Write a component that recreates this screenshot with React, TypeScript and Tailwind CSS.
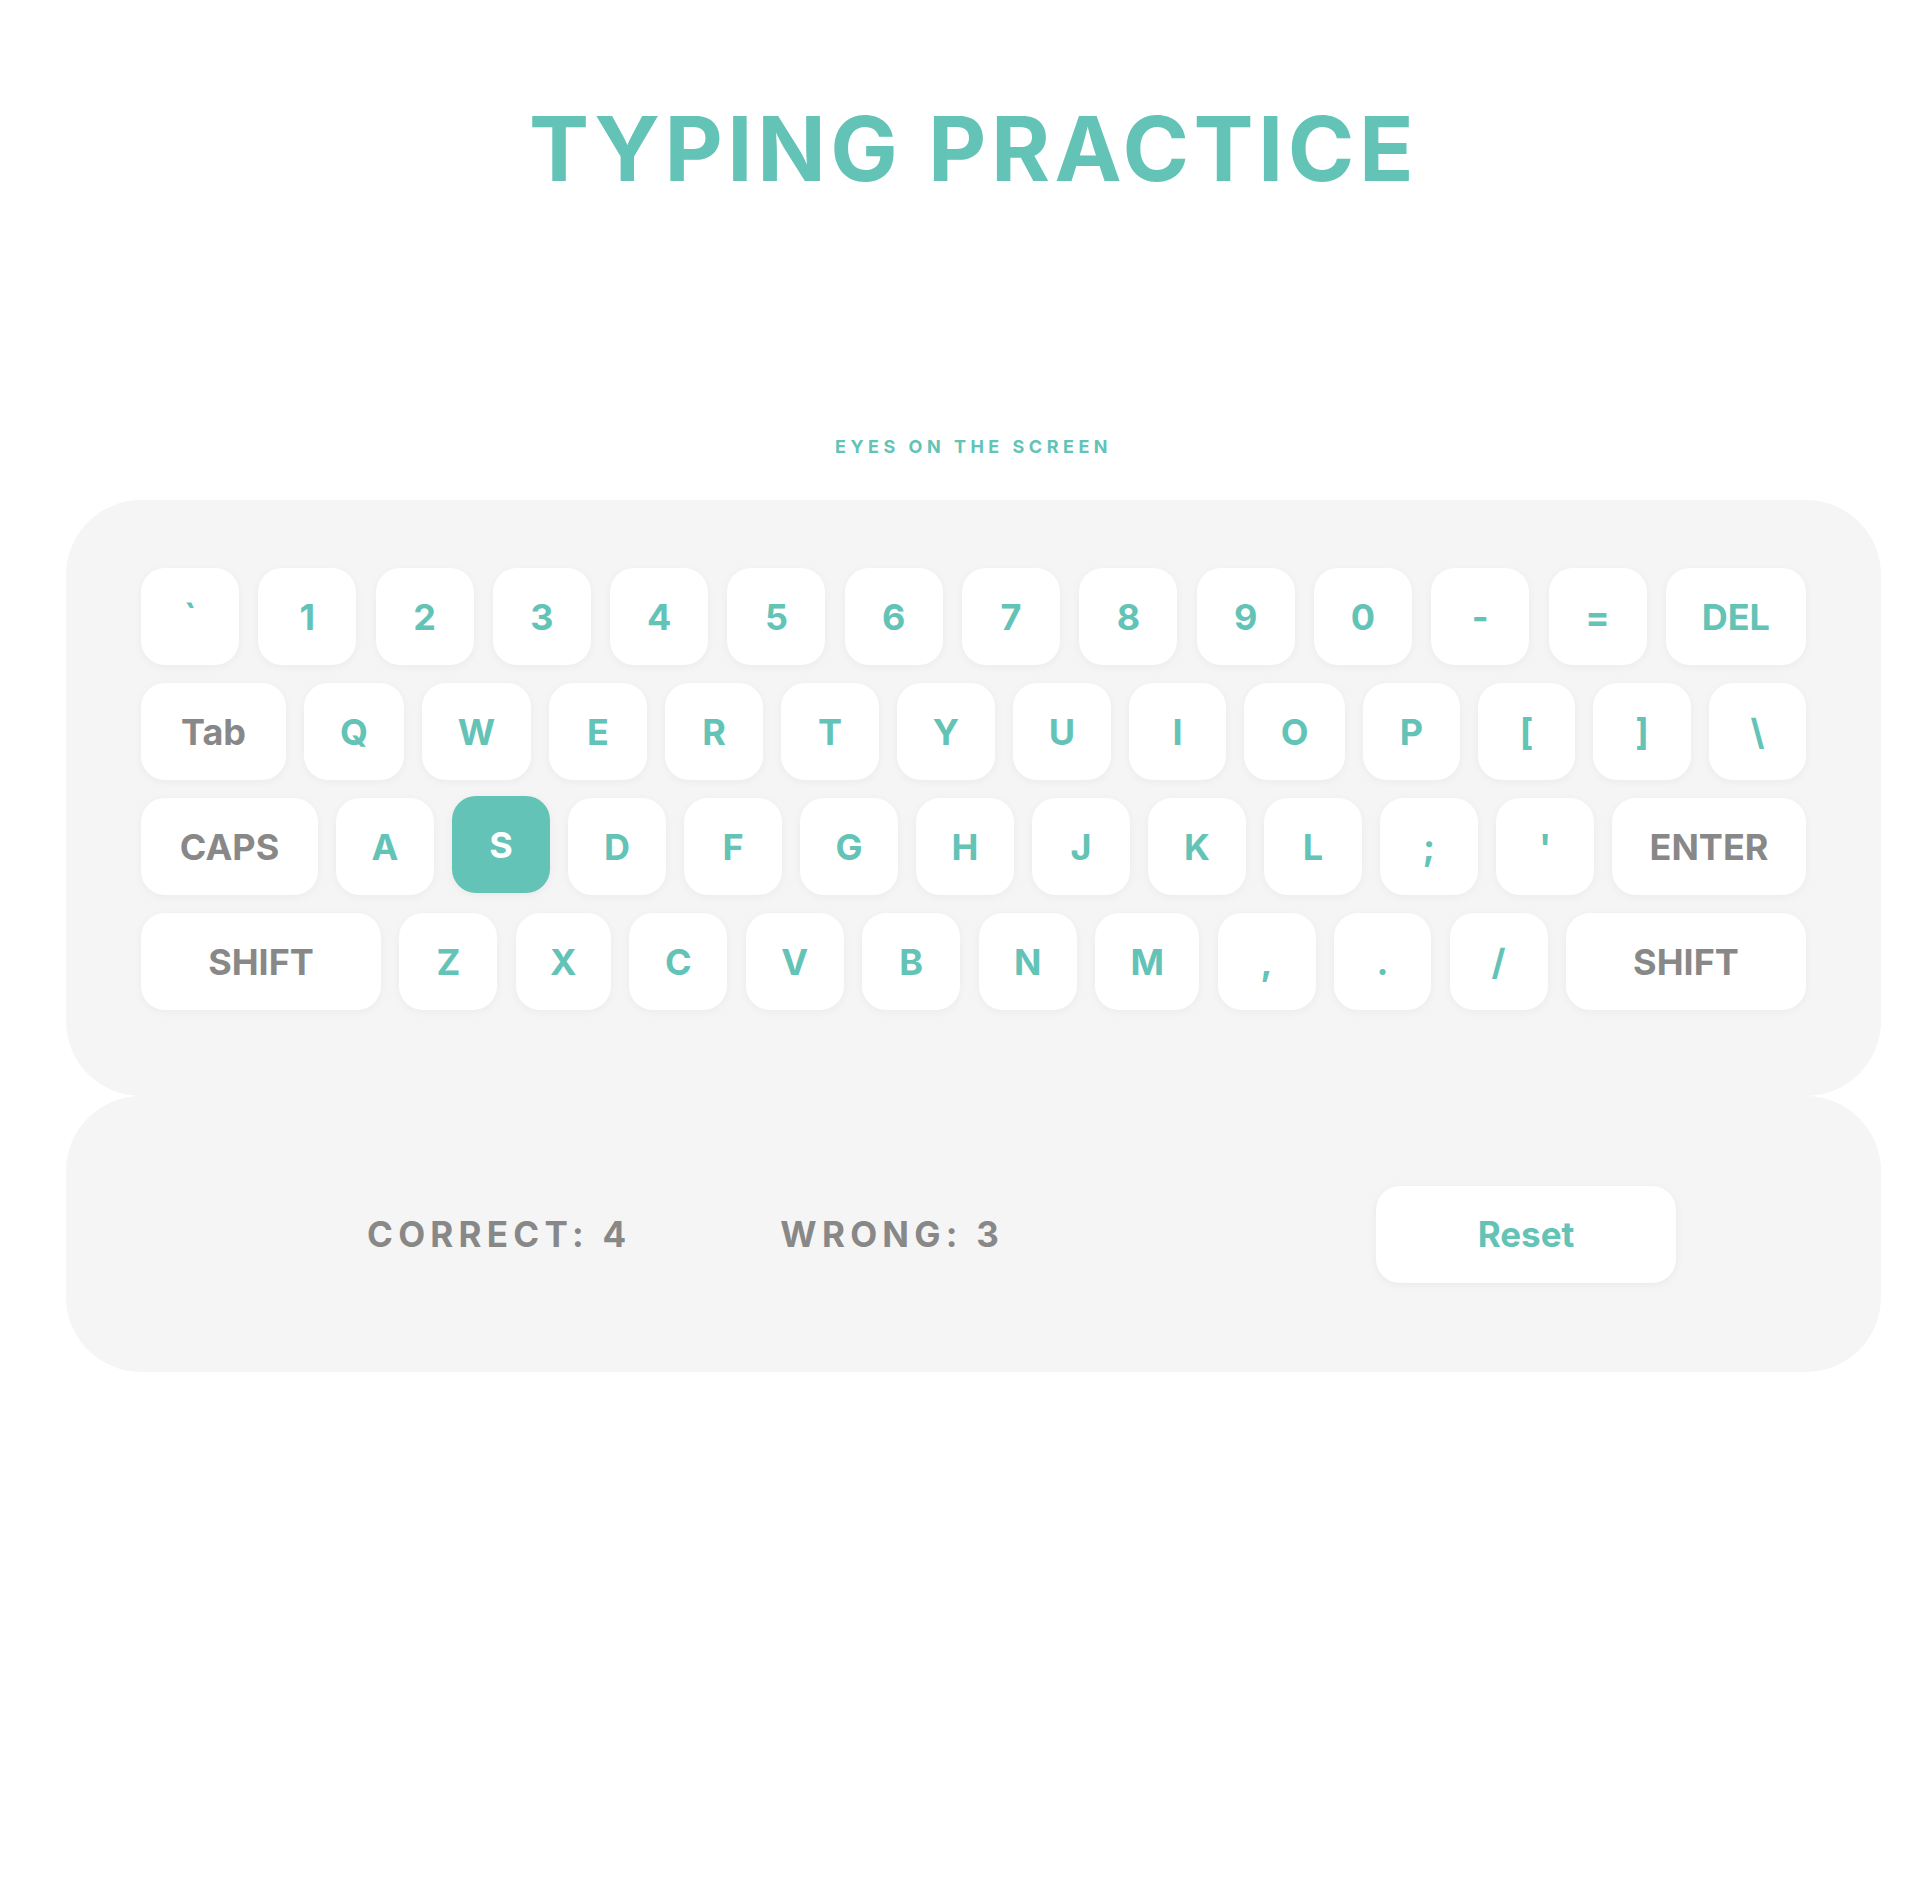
type Key = { label: string; w: string; gray?: boolean; active?: boolean };

const k = (label: string, w = "w-[98px]", gray = false): Key => ({ label, w, gray });

const rows: Key[][] = [
  [
    k("`"), k("1"), k("2"), k("3"), k("4"), k("5"), k("6"),
    k("7"), k("8"), k("9"), k("0"), k("-"), k("="),
    k("DEL", "w-[140px]"),
  ],
  [
    k("Tab", "w-[145px]", true), k("Q", "w-[100px]"), k("W", "w-[109px]"),
    k("E"), k("R"), k("T"), k("Y"), k("U"), k("I", "w-[97px]"),
    k("O", "w-[101px]"), k("P", "w-[97px]"), k("[", "w-[97px]"), k("]"),
    k("\\", "w-[97px]"),
  ],
  [
    k("CAPS", "w-[177px]", true), k("A"), { label: "S", w: "w-[98px]", active: true },
    k("D"), k("F"), k("G"), k("H"), k("J"), k("K"), k("L"), k(";"), k("'"),
    k("ENTER", "w-[194px]", true),
  ],
  [
    k("SHIFT", "w-[240px]", true), k("Z"), k("X", "w-[95px]"), k("C"), k("V"),
    k("B"), k("N"), k("M", "w-[104px]"), k(","), k(".", "w-[97px]"), k("/"),
    k("SHIFT", "w-[240px]", true),
  ],
];

function KeyCap({ item }: { item: Key }) {
  if (item.active) {
    return (
      <div
        className={`${item.w} h-[97px] -translate-y-[2px] flex items-center justify-center rounded-[24px] bg-[#62c3b6] text-white text-[36px] font-bold leading-none shadow-[0_2px_10px_rgba(0,0,0,0.05)]`}
      >
        {item.label}
      </div>
    );
  }
  return (
    <div
      className={`${item.w} h-[97px] flex items-center justify-center rounded-[24px] bg-white text-[36px] font-bold leading-none shadow-[0_2px_10px_rgba(0,0,0,0.045)] ${
        item.gray ? "text-[#888888]" : "text-[#62c3b6]"
      }`}
    >
      {item.label}
    </div>
  );
}

export default function App() {
  const correct = 4;
  const wrong = 3;

  return (
    <div
      className="w-full min-h-[1882px] bg-white pl-[66px] pr-[40px] pt-[104px]"
      style={{ fontFamily: "Inter, 'Liberation Sans', sans-serif" }}
    >
      <h1 className="text-center text-[90px] font-bold leading-none tracking-[0.05em] text-[#62c3b6]">
        TYPING PRACTICE
      </h1>

      <p className="mt-[244px] text-center text-[18px] font-bold leading-none tracking-[0.25em] text-[#62c3b6]">
        EYES ON THE SCREEN
      </p>

      {/* keyboard */}
      <div className="mt-[44px] rounded-[75px] bg-[#f5f5f5] px-[75px] pt-[68px] pb-[86px]">
        <div className="flex flex-col gap-[18px]">
          {rows.map((row, i) => (
            <div key={i} className="flex justify-between">
              {row.map((item, j) => (
                <KeyCap key={j} item={item} />
              ))}
            </div>
          ))}
        </div>
      </div>

      {/* score */}
      <div className="flex h-[276px] items-center rounded-[75px] bg-[#f5f5f5] pl-[301px] pr-[205px]">
        <div className="flex items-center gap-[149px] text-[35px] font-bold leading-none tracking-[0.15em] text-[#888888]">
          <span>CORRECT: {correct}</span>
          <span>WRONG: {wrong}</span>
        </div>
        <button
          type="button"
          className="ml-auto h-[97px] w-[300px] rounded-[24px] bg-white text-[35px] font-bold text-[#62c3b6] shadow-[0_2px_10px_rgba(0,0,0,0.05)]"
        >
          Reset
        </button>
      </div>
    </div>
  );
}
